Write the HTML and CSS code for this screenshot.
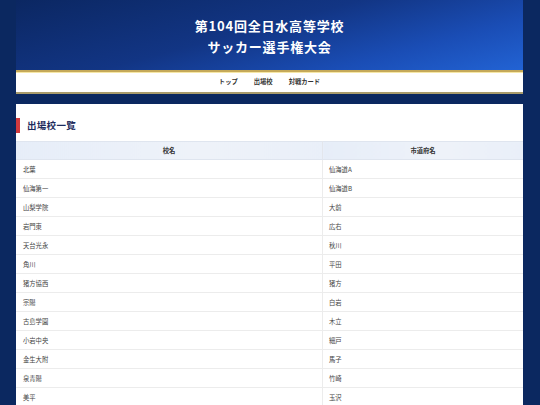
FILE: index.html
```html
<!DOCTYPE html>
<html lang="ja">
<head>
<meta charset="utf-8">
<title>第104回全日水高等学校サッカー選手権大会</title>
<link rel="stylesheet" href="styles.css">
</head>
<body>
<div class="page">
  <header class="hero">
    <h1 class="title">第104回全日水高等学校<br>サッカー選手権大会</h1>
  </header>
  <nav class="nav">
    <a class="nav-item" href="#">トップ</a>
    <a class="nav-item" href="#">出場校</a>
    <a class="nav-item" href="#">対戦カード</a>
  </nav>
  <main class="card">
    <h2 class="section-title">出場校一覧</h2>
    <table class="schools">
      <thead>
        <tr><th class="col-name">校名</th><th>市道府名</th></tr>
      </thead>
      <tbody>
        <tr><td>北葉</td><td>仙海道A</td></tr>
        <tr><td>仙海第一</td><td>仙海道B</td></tr>
        <tr><td>山梨学院</td><td>大前</td></tr>
        <tr><td>岩門東</td><td>広右</td></tr>
        <tr><td>天台光永</td><td>秋川</td></tr>
        <tr><td>角川</td><td>平田</td></tr>
        <tr><td>猪方協西</td><td>猪方</td></tr>
        <tr><td>宗陽</td><td>白岩</td></tr>
        <tr><td>古島学園</td><td>木立</td></tr>
        <tr><td>小岩中央</td><td>細戸</td></tr>
        <tr><td>金生大附</td><td>馬子</td></tr>
        <tr><td>泉青陽</td><td>竹崎</td></tr>
        <tr><td>美平</td><td>玉沢</td></tr>
      </tbody>
    </table>
  </main>
</div>
</body>
</html>
```
FILE: styles.css
```css
html, body {
  margin: 0;
  padding: 0;
}
body {
  background: #0b2860;
  font-family: "Noto Sans CJK JP", "Noto Sans", sans-serif;
  overflow: hidden;
}
.page {
  width: 507px;
  margin-left: 16px;
}
.hero {
  height: 70px;
  box-sizing: border-box;
  padding-top: 15px;
  background: linear-gradient(165deg, #0b2762 0%, #123584 45%, #1a4db5 75%, #2263d4 100%);
}
.title {
  margin: 0;
  color: #ffffff;
  text-align: center;
  font-size: 13px;
  line-height: 21px;
  font-weight: 700;
  letter-spacing: 0.8px;
}
.nav {
  display: flex;
  justify-content: center;
  align-items: center;
  gap: 16px;
  height: 20px;
  background: #ffffff;
  border-top: 2px solid #c5a95a;
  border-bottom: 2px solid #a99c6c;
  box-shadow: inset 0 1px 0 #f6e7a6;
}
.nav-item {
  color: #333333;
  font-size: 6.3px;
  font-weight: 700;
  text-decoration: none;
  line-height: 1;
}
.card {
  display: block;
  margin-top: 10px;
  background: #ffffff;
}
.section-title {
  margin: 0;
  padding: 14px 0 8px 0;
  font-size: 9.5px;
  line-height: 15px;
  font-weight: 700;
  color: #1c2b5c;
  letter-spacing: 0.3px;
}
.section-title::before {
  content: "";
  display: inline-block;
  width: 4px;
  height: 15px;
  background: #d13a3e;
  vertical-align: top;
  margin-right: 7px;
}
.schools {
  width: 100%;
  border-collapse: collapse;
  font-size: 6.3px;
}
.schools th {
  height: 17px;
  padding: 0;
  background: linear-gradient(90deg, #e6edf8 0%, #eef2f9 60%, #e9eff9 100%);
  color: #333333;
  font-weight: 700;
  text-align: center;
  border-top: 1px solid #dfe5ef;
  border-bottom: 1px solid #dfe5ef;
}
.schools th.col-name {
  width: 306px;
  border-right: 1px solid #e3e6ec;
}
.schools td {
  height: 18px;
  padding: 0 6px;
  color: #444444;
  border-bottom: 1px solid #ececec;
}
.schools td:first-child {
  padding-left: 7px;
  border-right: 1px solid #ececec;
}
```
